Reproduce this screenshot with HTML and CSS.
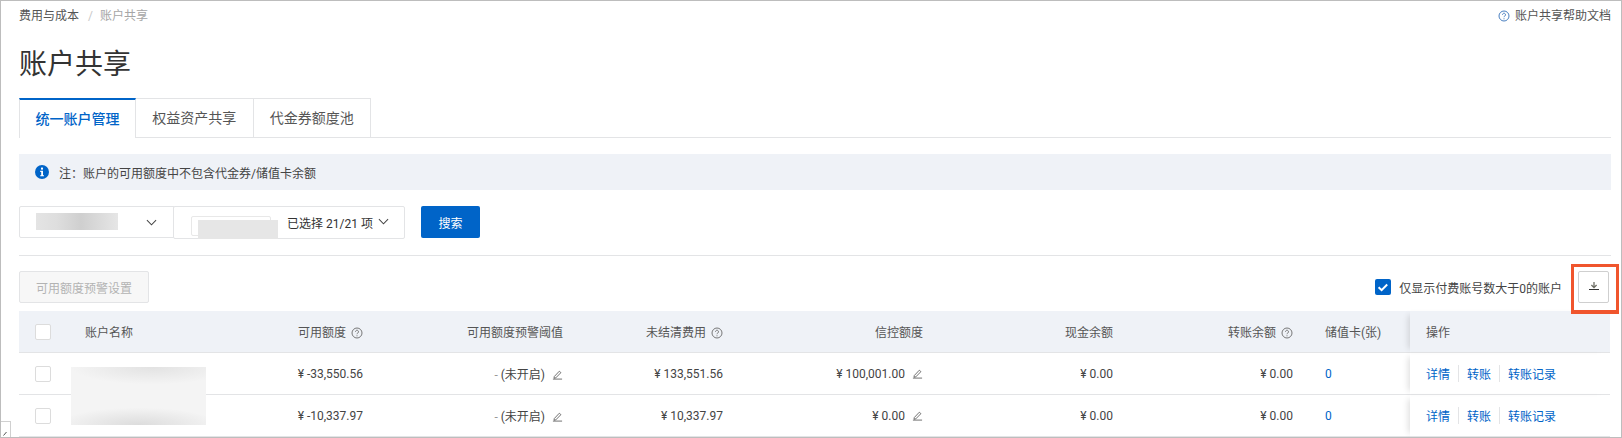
FILE: index.html
```html
<!DOCTYPE html>
<html lang="zh-CN">
<head>
  <meta charset="UTF-8">
  <title>账户共享</title>
  <link rel="stylesheet" href="styles.css">
</head>
<body>
  <div class="page">
    <!-- 面包屑 -->
    <div class="top-row">
      <div class="breadcrumb">
        <span>费用与成本</span>
        <span class="sep">/</span>
        <span class="current">账户共享</span>
      </div>
      <a class="help-link">
        <svg class="help-icon blue" viewBox="0 0 12 12"><circle cx="6" cy="6" r="5"/><path d="M4.5 4.7a1.5 1.5 0 1 1 2.3 1.3c-.5.3-.8.6-.8 1.2"/><path d="M6 8.3v1"/></svg>
        账户共享帮助文档
      </a>
    </div>

    <h1 class="title">账户共享</h1>

    <!-- 标签页 -->
    <div class="tabs">
      <div class="tab active">统一账户管理</div>
      <div class="tab">权益资产共享</div>
      <div class="tab">代金券额度池</div>
    </div>

    <div class="notice">
      <svg class="notice-icon" viewBox="0 0 14 14"><circle cx="7" cy="7" r="7" fill="#0064c8"/><rect x="6" y="2.6" width="2" height="2" fill="#fff"/><path d="M5.2 5.8H8v4.4h1v1.1H5.2v-1.1h1V6.9h-1z" fill="#fff"/></svg>
      <span>注&#xFF1A;账户的可用额度中不包含代金券/储值卡余额</span>
    </div>

    <!-- 筛选 -->
    <div class="filters">
      <div class="select first">
        <span class="blur blur-a"></span>
        <svg class="chevron" viewBox="0 0 12 7"><path d="M1 1l5 5 5-5"/></svg>
      </div>
      <div class="select second">
        <span class="mini-input"></span>
        <span class="blur blur-b"></span>
        <span class="picked">已选择 21/21 项</span>
        <svg class="chevron" viewBox="0 0 12 7"><path d="M1 1l5 5 5-5"/></svg>
      </div>
      <button class="btn-primary">搜索</button>
    </div>

    <div class="divider"></div>

    <div class="toolbar">
      <button class="btn-disabled">可用额度预警设置</button>
      <label class="only-paid">
        <span class="check on"><svg viewBox="0 0 16 16"><path d="M3.6 8.2l3 2.9 5.6-5.6"/></svg></span>
        仅显示付费账号数大于0的账户
      </label>
      <div class="export-wrap">
        <button class="btn-export">
          <svg viewBox="0 0 12 12"><path d="M6 1v5.5M3.4 4L6 6.6 8.6 4" class="arrow"/><path d="M1 8.5h10"/></svg>
        </button>
      </div>
    </div>

    <!-- 账户表格 -->
    <div class="table-wrap">
      <table class="accounts">
        <colgroup>
          <col class="c-check"><col class="c-name"><col class="c-limit"><col class="c-alert"><col class="c-unpaid">
          <col class="c-credit"><col class="c-cash"><col class="c-transfer"><col class="c-card"><col class="c-op">
        </colgroup>
        <thead>
          <tr>
            <th><span class="check"></span></th>
            <th>账户名称</th>
            <th class="num">可用额度<svg class="help-icon" viewBox="0 0 12 12"><circle cx="6" cy="6" r="5"/><path d="M4.5 4.7a1.5 1.5 0 1 1 2.3 1.3c-.5.3-.8.6-.8 1.2"/><path d="M6 8.3v1"/></svg></th>
            <th class="num">可用额度预警阈值</th>
            <th class="num">未结清费用<svg class="help-icon" viewBox="0 0 12 12"><circle cx="6" cy="6" r="5"/><path d="M4.5 4.7a1.5 1.5 0 1 1 2.3 1.3c-.5.3-.8.6-.8 1.2"/><path d="M6 8.3v1"/></svg></th>
            <th class="num">信控额度</th>
            <th class="num">现金余额</th>
            <th class="num">转账余额<svg class="help-icon" viewBox="0 0 12 12"><circle cx="6" cy="6" r="5"/><path d="M4.5 4.7a1.5 1.5 0 1 1 2.3 1.3c-.5.3-.8.6-.8 1.2"/><path d="M6 8.3v1"/></svg></th>
            <th>储值卡(张)</th>
            <th class="op">操作</th>
          </tr>
        </thead>
        <tbody>
          <tr>
            <td><span class="check"></span></td>
            <td></td>
            <td class="num">¥ -33,550.56</td>
            <td class="num"><span class="muted">-</span> (未开启)<svg class="pencil" viewBox="0 0 12 12"><path d="M2.5 8.2L8 2.4l1.7 1.6-5.6 5.7-1.9.3z"/><path d="M1 11h10"/></svg></td>
            <td class="num">¥ 133,551.56</td>
            <td class="num">¥ 100,001.00<svg class="pencil" viewBox="0 0 12 12"><path d="M2.5 8.2L8 2.4l1.7 1.6-5.6 5.7-1.9.3z"/><path d="M1 11h10"/></svg></td>
            <td class="num">¥ 0.00</td>
            <td class="num">¥ 0.00</td>
            <td class="link">0</td>
            <td class="op"><div class="actions"><a>详情</a><a>转账</a><a>转账记录</a></div></td>
          </tr>
          <tr>
            <td><span class="check"></span></td>
            <td></td>
            <td class="num">¥ -10,337.97</td>
            <td class="num"><span class="muted">-</span> (未开启)<svg class="pencil" viewBox="0 0 12 12"><path d="M2.5 8.2L8 2.4l1.7 1.6-5.6 5.7-1.9.3z"/><path d="M1 11h10"/></svg></td>
            <td class="num">¥ 10,337.97</td>
            <td class="num">¥ 0.00<svg class="pencil" viewBox="0 0 12 12"><path d="M2.5 8.2L8 2.4l1.7 1.6-5.6 5.7-1.9.3z"/><path d="M1 11h10"/></svg></td>
            <td class="num">¥ 0.00</td>
            <td class="num">¥ 0.00</td>
            <td class="link">0</td>
            <td class="op"><div class="actions"><a>详情</a><a>转账</a><a>转账记录</a></div></td>
          </tr>
        </tbody>
      </table>
      <div class="blur-names"></div>
    </div>

    <div class="corner-tab">
      <svg viewBox="0 0 6 6"><path d="M4.5 1L1.5 4.5"/></svg>
    </div>
  </div>
</body>
</html>
```

FILE: styles.css
```css
* {
  box-sizing: border-box;
}

html,
body {
  margin: 0;
  padding: 0;
  height: 438px;
  overflow: hidden;
}

body {
  font-family: Roboto, "Noto Sans CJK SC", sans-serif;
  font-size: 12px;
  color: #333;
  background-color: #fff;
}

.page {
  position: relative;
  height: 438px;
  padding: 6px 10px 0 18px;
  border: 1px solid #bdbdbd;
  overflow: hidden;
}

/* 面包屑 */
.top-row {
  display: flex;
  justify-content: space-between;
  align-items: center;
  height: 18px;
  line-height: 18px;
}

.breadcrumb {
  display: flex;
  color: #555;
}

.breadcrumb .sep {
  margin: 0 7px 0 9px;
  color: #c8c8c8;
}

.breadcrumb .current {
  color: #a6a6a6;
}

.help-link {
  display: flex;
  align-items: center;
  gap: 5px;
  color: #555;
}

.help-icon {
  width: 12px;
  height: 12px;
  fill: none;
  stroke: #777;
  stroke-width: 1;
}

.help-icon.blue {
  stroke: #4a7fc0;
}

.title {
  margin: 20px 0 0;
  height: 40px;
  line-height: 40px;
  font-size: 28px;
  font-weight: 400;
  color: #333;
}

/* 标签页 */
.tabs {
  display: flex;
  margin-top: 13px;
  height: 40px;
  border-bottom: 1px solid #e3e4e6;
}

.tab {
  width: 117.5px;
  height: 40px;
  line-height: 38px;
  border: 1px solid #e3e4e6;
  border-left: 0;
  font-size: 14px;
  text-align: center;
  color: #555;
}

.tab.active {
  width: 117px;
  border-top: 2px solid #0064c8;
  border-left: 1px solid #e3e4e6;
  border-bottom: 0;
  background-color: #fff;
  color: #0064c8;
  font-weight: 500;
}

.notice {
  display: flex;
  align-items: center;
  gap: 10px;
  margin-top: 16px;
  height: 36px;
  padding-left: 16px;
  background-color: #eff2f7;
  color: #444;
}

.notice-icon {
  width: 14px;
  height: 14px;
}

/* 筛选 */
.filters {
  display: flex;
  align-items: flex-start;
  margin-top: 16px;
}

.select {
  display: flex;
  align-items: center;
  position: relative;
  background-color: #fff;
  border: 1px solid #e3e4e6;
  border-radius: 2px;
}

.select.first {
  width: 156px;
  height: 32px;
  padding: 0 10px 0 16px;
  justify-content: flex-end;
}

.select.second {
  width: 232px;
  height: 33px;
  margin-left: -2px;
  padding-left: 113px;
}

.chevron {
  width: 11px;
  height: 7px;
  fill: none;
  stroke: #444;
  stroke-width: 1.1;
}

.select.second .chevron {
  margin-left: 5px;
  margin-top: -3px;
}

.select.first .chevron {
  margin-right: 7px;
}

.mini-input {
  position: absolute;
  left: 17px;
  top: 9px;
  width: 80px;
  height: 20px;
  border: 1px solid #e8e8e8;
  border-radius: 2px;
}

.blur {
  position: absolute;
}

.blur-a {
  left: 16px;
  top: 6px;
  width: 82px;
  height: 17px;
  background: linear-gradient(90deg, #e4e4e4 0%, #dedede 25%, #cfcfcf 55%, #e6e6e6 100%);
}

.blur-b {
  left: 24px;
  top: 13px;
  width: 80px;
  height: 19px;
  background-color: #e6e6e6;
}

.picked {
  color: #333;
  white-space: nowrap;
}

.btn-primary {
  width: 59px;
  height: 32px;
  margin-left: 16px;
  padding: 0;
  border: 0;
  border-radius: 2px;
  background-color: #0064c8;
  color: #fff;
  font: inherit;
}

.divider {
  height: 1px;
  margin-top: 16px;
  background-color: #e3e4e6;
}

/* 工具栏 */
.toolbar {
  display: flex;
  align-items: center;
  margin-top: 15px;
  height: 32px;
}

.btn-disabled {
  width: 130px;
  height: 32px;
  padding: 0;
  border: 1px solid #e3e4e6;
  border-radius: 2px;
  background-color: #f7f7f7;
  color: #b3b3b3;
  font: inherit;
}

.only-paid {
  display: flex;
  align-items: center;
  gap: 8px;
  margin-left: auto;
  color: #444;
}

.check {
  display: inline-block;
  width: 16px;
  height: 16px;
  border: 1px solid #dcdcdc;
  border-radius: 2px;
  background-color: #fff;
  vertical-align: middle;
}

.check.on {
  border: 0;
  background-color: #0064c8;
}

.check svg {
  display: block;
  width: 16px;
  height: 16px;
  fill: none;
  stroke: #fff;
  stroke-width: 2;
}

.export-wrap {
  position: relative;
  z-index: 2;
  margin-left: 16px;
  margin-right: 2px;
}

.export-wrap::after {
  content: "";
  position: absolute;
  left: -7px;
  top: -7px;
  width: 42px;
  height: 43px;
  border: 3px solid #f0552d;
  border-bottom-width: 4px;
  pointer-events: none;
}

.btn-export {
  display: flex;
  align-items: center;
  justify-content: center;
  width: 31px;
  height: 32px;
  padding: 0;
  border: 1px solid #cfcfcf;
  border-radius: 2px;
  background-color: #fff;
}

.btn-export svg {
  width: 12px;
  height: 12px;
  fill: none;
  stroke: #333;
  stroke-width: 1;
}

.btn-export .arrow {
  stroke: #6f6f66;
  stroke-width: 1.3;
}

/* 账户表格 */
.table-wrap {
  position: relative;
  margin-top: 8px;
}

.accounts {
  width: 1591px;
  table-layout: fixed;
  border-collapse: separate;
  border-spacing: 0;
}

.c-check { width: 50px; }
.c-name { width: 170px; }
.c-limit { width: 140px; }
.c-alert { width: 200px; }
.c-unpaid { width: 160px; }
.c-credit { width: 200px; }
.c-cash { width: 190px; }
.c-transfer { width: 180px; }
.c-card { width: 101px; }
.c-op { width: 200px; }

.accounts th,
.accounts td {
  padding: 0 16px;
  text-align: left;
  border-bottom: 1px solid #e3e4e6;
  white-space: nowrap;
  font-weight: 400;
}

.accounts th {
  height: 42px;
  background-color: #eff2f7;
  color: #555;
}

.accounts td {
  height: 42px;
  color: #444;
}

.accounts .num {
  text-align: right;
}

.accounts .link {
  color: #0064c8;
}

.accounts .op {
  box-shadow: -6px 0 6px -4px rgba(0, 0, 0, 0.12);
}

.accounts th .help-icon {
  margin-left: 5px;
  vertical-align: -2px;
}

.pencil {
  width: 11px;
  height: 11px;
  margin-left: 7px;
  vertical-align: -1px;
  fill: none;
  stroke: #555;
  stroke-width: 0.9;
}

.muted {
  color: #999;
}

.actions {
  display: flex;
  color: #0064c8;
}

.actions a + a {
  margin-left: 8px;
  padding-left: 8px;
  border-left: 1px solid #e3e4e6;
}

.blur-names {
  position: absolute;
  left: 52px;
  top: 56px;
  width: 135px;
  height: 58px;
  background:
    radial-gradient(ellipse 60% 30% at 60% 0%, #e2e2e2, rgba(226, 226, 226, 0)),
    radial-gradient(ellipse 60% 30% at 50% 100%, #dcdcdc, rgba(220, 220, 220, 0)),
    #f4f4f4;
}

.corner-tab {
  position: absolute;
  left: 0;
  bottom: 0;
  width: 10px;
  height: 16px;
  background-color: #fff;
  border: 1px solid #d0d0d0;
  border-left: 0;
  border-bottom: 0;
}

.corner-tab svg {
  display: block;
  width: 6px;
  height: 6px;
  margin: 9px 0 0 1px;
  fill: none;
  stroke: #555;
}
```
